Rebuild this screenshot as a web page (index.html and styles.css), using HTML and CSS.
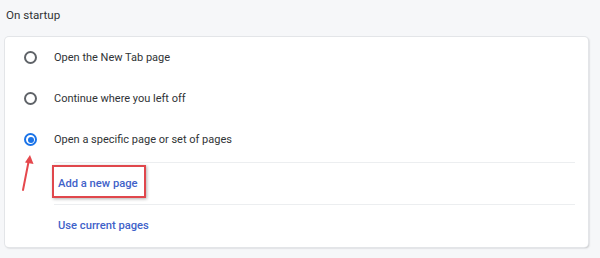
FILE: index.html
```html
<!DOCTYPE html>
<html lang="en">
<head>
  <meta charset="UTF-8" />
  <title>On startup</title>
  <link rel="stylesheet" href="styles.css">
</head>
<body>
  <h2 class="section-title">On startup</h2>
  <div class="card">
    <label class="radio-row">
      <span class="radio"></span>
      <span class="radio-label">Open the New Tab page</span>
    </label>
    <label class="radio-row">
      <span class="radio"></span>
      <span class="radio-label">Continue where you left off</span>
    </label>
    <label class="radio-row">
      <span class="radio checked"></span>
      <span class="radio-label">Open a specific page or set of pages</span>
    </label>
    <div class="sub-list">
      <div class="sub-item">
        <a class="link" href="#">Add a new page</a>
        <span class="highlight"></span>
      </div>
      <div class="sub-item">
        <a class="link" href="#">Use current pages</a>
      </div>
    </div>
    <svg class="arrow" width="20" height="40" viewBox="0 0 20 40">
      <line x1="5" y1="36" x2="10.5" y2="8" stroke="#e5484d" stroke-width="2" stroke-linecap="round" />
      <polygon points="12,1 15.5,10 7,8.5" fill="#e5484d" />
    </svg>
  </div>
</body>
</html>
```

FILE: styles.css
```css
body {
  margin: 0;
  font-family: Roboto, "Liberation Sans", Arial, sans-serif;
  background: #f6f7f9;
  width: 600px;
  height: 258px;
  overflow: hidden;
}
.section-title {
  margin: 0;
  padding: 8px 0 0 6px;
  height: 29px;
  font-size: 11.6px;
  font-weight: 400;
  color: #303336;
}
.card {
  position: relative;
  margin-left: 5px;
  width: 583px;
  height: 210px;
  background: #fff;
  border-radius: 4px;
  box-shadow: 0 0 0 1px #e3e5e8, 1px 1px 2px rgba(60, 64, 67, 0.35);
  box-sizing: border-box;
}
.radio-row {
  display: flex;
  align-items: center;
  height: 41px;
  padding-left: 19px;
}
.radio {
  width: 13px;
  height: 13px;
  border: 2px solid #5f6368;
  border-radius: 50%;
  box-sizing: border-box;
  margin-right: 17px;
  position: relative;
}
.radio.checked {
  border-color: #1a73e8;
}
.radio.checked::after {
  content: "";
  position: absolute;
  left: 1.5px;
  top: 1.5px;
  width: 6px;
  height: 6px;
  border-radius: 50%;
  background: #1a73e8;
}
.radio-label {
  font-size: 11px;
  color: #303336;
}
.sub-list {
  margin: 2px 13px 0 49px;
}
.sub-item {
  position: relative;
  display: flex;
  align-items: center;
  height: 41px;
  border-top: 1px solid #eceef0;
  padding-left: 4px;
}
.link {
  font-size: 11.2px;
  font-weight: 500;
  color: #4162c9;
  text-decoration: none;
}
.highlight {
  position: absolute;
  left: -2px;
  top: 2px;
  width: 94px;
  height: 33px;
  border: 2px solid #e0474c;
  box-sizing: border-box;
  box-shadow: 1px 1px 3px rgba(0, 0, 0, 0.3);
}
.arrow {
  position: absolute;
  left: 13px;
  top: 117px;
}
```
